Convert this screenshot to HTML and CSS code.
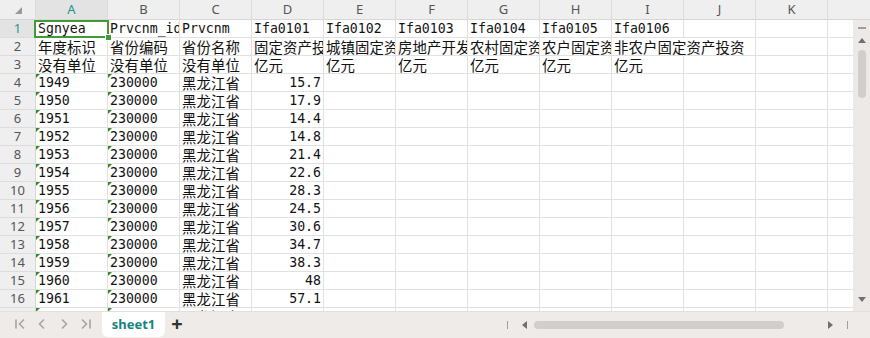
FILE: index.html
```html
<!DOCTYPE html>
<html lang="zh-CN">
<head>
    <meta charset="UTF-8">
    <title>sheet1</title>
    <link rel="stylesheet" href="styles.css">
</head>
<body>
<div class="sheet">
    <div class="main">
        <div class="cells">
            <div class="grid">
                <div class="hd corner"><span class="tri"></span></div>
                <div class="hd cur">A</div><div class="hd">B</div><div class="hd">C</div><div class="hd">D</div><div class="hd">E</div><div class="hd">F</div><div class="hd">G</div><div class="hd">H</div><div class="hd">I</div><div class="hd">J</div><div class="hd">K</div><div class="hd">L</div>

                <div class="rn cur">1</div>
                <div class="c sel-cell">Sgnyea</div><div class="c">Prvcnm_id</div><div class="c">Prvcnm</div><div class="c">Ifa0101</div><div class="c">Ifa0102</div><div class="c">Ifa0103</div><div class="c">Ifa0104</div><div class="c">Ifa0105</div><div class="c">Ifa0106</div><div class="c"></div><div class="c"></div><div class="c"></div>

                <div class="rn">2</div>
                <div class="c zh">年度标识</div><div class="c zh">省份编码</div><div class="c zh">省份名称</div><div class="c zh">固定资产投资</div><div class="c zh">城镇固定资产投资</div><div class="c zh">房地产开发投资</div><div class="c zh">农村固定资产投资</div><div class="c zh">农户固定资产投资</div><div class="c zh spill">非农户固定资产投资</div><div class="c"></div><div class="c"></div><div class="c"></div>

                <div class="rn">3</div>
                <div class="c zh">没有单位</div><div class="c zh">没有单位</div><div class="c zh">没有单位</div><div class="c zh">亿元</div><div class="c zh">亿元</div><div class="c zh">亿元</div><div class="c zh">亿元</div><div class="c zh">亿元</div><div class="c zh">亿元</div><div class="c"></div><div class="c"></div><div class="c"></div>

                <div class="sel"><span class="handle"></span></div>
            </div>
            <div class="grid" id="dataRows"></div>
        </div>
        <div class="vscroll">
            <div class="vs-top"></div>
            <div class="vs-track">
                <span class="vs-bar"></span>
                <span class="tri-up"></span>
                <span class="vs-thumb"></span>
                <span class="vs-fill"></span>
                <span class="tri-down"></span>
            </div>
        </div>
    </div>
    <div class="tabbar">
        <div class="nav">
            <svg width="22" height="24" viewBox="0 0 22 24"><path d="M7 7.5v9M15 7.5l-4.5 4.5 4.5 4.5" fill="none" stroke="#a5a5a5" stroke-width="1.6"/></svg>
            <svg width="22" height="24" viewBox="0 0 22 24"><path d="M13 7.5l-4.5 4.5 4.5 4.5" fill="none" stroke="#a5a5a5" stroke-width="1.6"/></svg>
            <svg width="22" height="24" viewBox="0 0 22 24"><path d="M9 7.5l4.5 4.5-4.5 4.5" fill="none" stroke="#a5a5a5" stroke-width="1.6"/></svg>
            <svg width="22" height="24" viewBox="0 0 22 24"><path d="M7 7.5l4.5 4.5-4.5 4.5M15 7.5v9" fill="none" stroke="#a5a5a5" stroke-width="1.6"/></svg>
        </div>
        <div class="tab">sheet1</div>
        <div class="add">+</div>
        <div class="hscroll">
            <span class="bar"></span>
            <span class="tri-left"></span>
            <span class="hs-thumb"></span>
            <span class="tri-right"></span>
            <span class="bar"></span>
        </div>
    </div>
</div>

<script>
    const anos = [1949, 1950, 1951, 1952, 1953, 1954, 1955, 1956, 1957, 1958, 1959, 1960, 1961, 1962];
    const valores = ["15.7", "17.9", "14.4", "14.8", "21.4", "22.6", "28.3", "24.5", "30.6", "34.7", "38.3", "48", "57.1", "44.0"];
    const linhas = document.getElementById("dataRows");

    anos.forEach((ano, i) => {
        let html = '<div class="rn">' + (i + 4) + '</div>';
        html += '<div class="c txt">' + ano + '</div>';
        html += '<div class="c txt">230000</div>';
        html += '<div class="c zh">黑龙江省</div>';
        html += '<div class="c num">' + valores[i] + '</div>';
        for (let k = 0; k < 8; k++) {
            html += '<div class="c"></div>';
        }
        linhas.insertAdjacentHTML("beforeend", html);
    });
</script>
</body>
</html>
```

FILE: styles.css
```css
* {
    box-sizing: border-box;
}
body {
    margin: 0;
    background: #ffffff;
    font-family: "Noto Sans", "Noto Sans CJK SC", sans-serif;
    overflow: hidden;
}
.sheet {
    width: 870px;
    height: 338px;
    display: flex;
    flex-direction: column;
    overflow: hidden;
}
.main {
    height: 311px;
    display: flex;
    overflow: hidden;
}
.cells {
    width: 853px;
    overflow: hidden;
}
.grid {
    position: relative;
    display: grid;
    grid-template-columns: 36px repeat(12, 72px);
    grid-auto-rows: 18px;
}
.grid:first-child {
    grid-template-rows: 20px;
}
.hd {
    background: #efefef;
    border-right: 1px solid #dcdcdc;
    border-bottom: 1px solid #d6d6d6;
    color: #555555;
    font-size: 13px;
    line-height: 19px;
    text-align: center;
}
.hd.cur, .rn.cur {
    background: #e3e3e3;
    color: #1b978a;
}
.corner {
    position: relative;
}
.tri {
    position: absolute;
    right: 13px;
    bottom: 5px;
    width: 0;
    height: 0;
    border-left: 7px solid transparent;
    border-bottom: 7px solid #9a9a9a;
}
.rn {
    background: #efefef;
    border-right: 1px solid #d6d6d6;
    border-bottom: 1px solid #dcdcdc;
    color: #555555;
    font-size: 13px;
    line-height: 17px;
    text-align: center;
}
.c {
    position: relative;
    border-right: 1px solid #e1e1e1;
    border-bottom: 1px solid #e1e1e1;
    padding: 0 2px;
    font-family: "DejaVu Sans Mono", "Noto Sans CJK SC", monospace;
    font-size: 13.2px;
    line-height: 18px;
    color: #111111;
    white-space: nowrap;
    overflow: hidden;
}
.c.zh {
    font-family: "Noto Sans CJK SC", sans-serif;
    font-size: 14.4px;
    letter-spacing: 0.1px;
}
.c.spill {
    overflow: visible;
    border-right-color: transparent;
    z-index: 1;
}
.c.num {
    text-align: right;
}
.c.txt::before {
    content: "";
    position: absolute;
    left: 0;
    top: 0;
    border-top: 4px solid #2f8a2a;
    border-right: 4px solid transparent;
}
/* caixa verde da célula ativa A1 */
.sel {
    position: absolute;
    left: 34px;
    top: 20px;
    width: 75px;
    height: 18px;
    border: 2px solid #409a38;
    z-index: 3;
}
.handle {
    position: absolute;
    right: -5px;
    bottom: -5px;
    width: 7px;
    height: 7px;
    background: #409a38;
    border: 1px solid #ffffff;
}
.vscroll {
    width: 17px;
    display: flex;
    flex-direction: column;
}
.vs-top {
    height: 20px;
    flex: none;
    background: #efefef;
    border-bottom: 1px solid #d6d6d6;
}
.vs-track {
    flex: 1;
    background: #ede9e7;
    display: flex;
    flex-direction: column;
    align-items: center;
    padding-top: 7px;
}
.vs-bar {
    width: 8px;
    height: 2px;
    background: #9e9e9e;
}
.tri-up {
    margin-top: 9px;
    border-left: 4px solid transparent;
    border-right: 4px solid transparent;
    border-bottom: 5px solid #707070;
}
.vs-thumb {
    width: 8px;
    height: 48px;
    margin-top: 7px;
    border-radius: 4px;
    background: #d2cecc;
}
.vs-fill {
    flex: 1;
}
.tri-down {
    margin-bottom: 9px;
    border-left: 4px solid transparent;
    border-right: 4px solid transparent;
    border-top: 5px solid #707070;
}
.tabbar {
    height: 27px;
    background: #eeebe9;
    border-top: 1px solid #e2dfdd;
    display: flex;
    align-items: flex-start;
}
.nav {
    width: 102px;
    display: flex;
    padding-left: 9px;
}
.nav svg {
    display: block;
}
.tab {
    width: 63px;
    height: 25px;
    background: #ffffff;
    border-radius: 0 0 6px 6px;
    color: #13857b;
    font-weight: bold;
    font-size: 13px;
    line-height: 24px;
    text-align: center;
}
.add {
    width: 24px;
    text-align: center;
    font-size: 20px;
    font-weight: bold;
    color: #333333;
    line-height: 24px;
}
.hscroll {
    margin-left: auto;
    width: 363px;
    height: 26px;
    display: flex;
    align-items: center;
    padding-right: 19px;
}
.hscroll .bar {
    width: 1px;
    height: 8px;
    background: #9e9e9e;
}
.tri-left {
    margin: 0 7px 0 14px;
    border-top: 4px solid transparent;
    border-bottom: 4px solid transparent;
    border-right: 5px solid #707070;
}
.hs-thumb {
    width: 250px;
    height: 8px;
    border-radius: 4px;
    background: #d2cecc;
}
.tri-right {
    margin: 0 14px 0 44px;
    border-top: 4px solid transparent;
    border-bottom: 4px solid transparent;
    border-left: 5px solid #707070;
}
```
